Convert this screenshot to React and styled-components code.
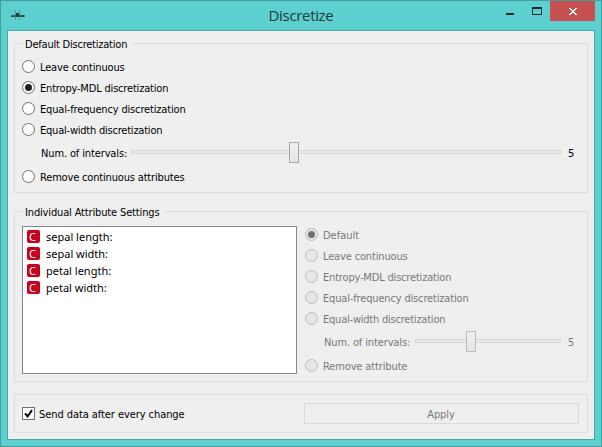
import React from 'react';
import styled, { createGlobalStyle } from 'styled-components';

const GlobalStyle = createGlobalStyle`
  * { box-sizing: border-box; }
  body { margin: 0; }
`;

const Window = styled.div`
  width: 602px;
  height: 447px;
  display: flex;
  flex-direction: column;
  padding: 0 6px 6px;
  background: #5ccfcf;
  border: 1px solid #479d9e;
  font: 11px/13px 'DejaVu Sans Condensed', 'DejaVu Sans', sans-serif;
  color: #000;
  white-space: nowrap;
`;

const TitleBar = styled.header`
  height: 29px;
  flex: none;
  display: grid;
  grid-template-columns: 150px 1fr 150px;
`;

const AppIcon = styled.svg`
  display: block;
  margin: 9px 0 0 3px;
`;

const WindowTitle = styled.h1`
  margin: 4px 0 0;
  font: 15px/20px 'Open Sans', sans-serif;
  letter-spacing: -0.33px;
  text-align: center;
  color: #25373a;
`;

const Controls = styled.div`
  display: flex;
  justify-content: flex-end;
  align-items: flex-start;
`;

const ControlButton = styled.button`
  width: ${p => p.$width}px;
  height: 20px;
  padding: 0;
  border: 0;
  background: ${p => (p.$close ? '#c75050' : 'transparent')};
  svg { display: block; }
`;

const Content = styled.main`
  flex: 1;
  display: flex;
  flex-direction: column;
  padding: 12px 6px 6px;
  background: #efefef;
  border: 1px solid #47a8a8;
`;

const Group = styled.section`
  height: ${p => p.$height}px;
  flex: none;
  margin-bottom: ${p => p.$gap || 0}px;
  padding: 0 9px 0 7px;
  border: 1px solid #dcdcdc;
`;

const GroupTitle = styled.h2`
  width: max-content;
  height: 13px;
  margin: -6px 0 0;
  padding: 0 5px 0 3px;
  background: #efefef;
  font: inherit;
  letter-spacing: ${p => p.$spacing}px;
`;

const Option = styled.label`
  height: 21px;
  display: flex;
  align-items: center;
  gap: 5px;
  color: ${p => (p.$disabled ? '#787878' : '#000')};
`;

const RadioCircle = styled.span`
  width: 13px;
  height: 13px;
  flex: none;
  display: grid;
  place-items: center;
  border-radius: 50%;
  border: 1px solid ${p => (p.$disabled ? '#bcbcbc' : '#707070')};
  background: ${p => (p.$disabled ? '#e6e6e6' : '#fff')};
  &::after {
    content: '';
    width: 7px;
    height: 7px;
    border-radius: 50%;
    background: ${p => (!p.$checked ? 'transparent' : p.$disabled ? '#707070' : '#212121')};
  }
`;

const Label = styled.span`
  padding-top: 2px;
  letter-spacing: ${p => p.$spacing || 0}px;
`;

const SliderRow = styled.div`
  height: 26px;
  display: flex;
  align-items: center;
  padding-left: 19px;
  color: ${p => (p.$disabled ? '#787878' : '#000')};
`;

const SliderLabel = styled.span`
  width: ${p => p.$width}px;
  letter-spacing: -0.13px;
`;

const Track = styled.div`
  position: relative;
  width: ${p => p.$width}px;
  height: 4px;
  margin: 0 7px 2px 0;
  background: #e7eaea;
  border: 1px solid #d6d6d6;
`;

const Thumb = styled.span`
  position: absolute;
  top: -9px;
  left: ${p => p.$offset}px;
  width: 10px;
  height: 21px;
  border: 1px solid ${p => (p.$disabled ? '#bbb' : '#a9a9a9')};
  background: linear-gradient(#f0f0f0, #e4e4e4);
`;

const DefaultOptions = styled.div`
  padding-top: 5px;
`;

const Columns = styled.div`
  display: flex;
  gap: 8px;
  padding-top: 7px;
`;

const AttributeList = styled.ul`
  width: 275px;
  height: 148px;
  margin: 0;
  padding: 1px 4px;
  list-style: none;
  background: #fff;
  border: 1px solid #828790;
`;

const Attribute = styled.li`
  height: 17px;
  display: flex;
  align-items: center;
  gap: 6px;
  font-family: 'Noto Sans', sans-serif;
`;

const TypeBadge = styled.span`
  width: 13px;
  height: 13px;
  padding-right: 2px;
  border-radius: 2px;
  background: #c8001e;
  color: #fff;
  font: 11px/13px 'Noto Sans', sans-serif;
  text-align: center;
`;

const AttributeOptions = styled.div`
  margin-top: -2px;
`;

const Footer = styled(Group)`
  display: flex;
  align-items: center;
  justify-content: space-between;
  padding-right: 8px;
`;

const CheckLabel = styled.label`
  display: flex;
  align-items: center;
  gap: 4px;
`;

const CheckBox = styled.span`
  width: 13px;
  height: 13px;
  border: 1px solid #707070;
  background: #fff;
  svg { display: block; }
`;

const ApplyButton = styled.button`
  width: 275px;
  height: 21px;
  padding: 2px 1px 0 0;
  border: 1px solid #d9d9d9;
  background: #efefef;
  color: #787878;
  font: inherit;
  letter-spacing: -0.1px;
`;

function Radio({ text, spacing, checked, disabled }) {
  return (
    <Option $disabled={disabled}>
      <RadioCircle $checked={checked} $disabled={disabled} />
      <Label $spacing={spacing}>{text}</Label>
    </Option>
  );
}

function Intervals({ width, offset, disabled }) {
  return (
    <SliderRow $disabled={disabled}>
      <SliderLabel $width={91}>Num. of intervals:</SliderLabel>
      <Track $width={width}>
        <Thumb $offset={offset} $disabled={disabled} />
      </Track>
      <span>5</span>
    </SliderRow>
  );
}

const attributes = ['sepal length:', 'sepal width:', 'petal length:', 'petal width:'];

export default function App() {
  return (
    <>
      <GlobalStyle />
      <Window>
        <TitleBar>
          <AppIcon width="16" height="12" viewBox="0 0 16 12" shapeRendering="crispEdges">
            <path d="M5 0h1v10H5zM9 0h1v10H9z" fill="#459c9c" />
            <path d="M1 5h14v2H1z" fill="#356a6a" />
            <path d="M1 6h3v1H1zM11 5h3v2h-3z" fill="#2c3e3e" />
            <path d="M6 3h3v4H6z" fill="#2e3a3a" />
          </AppIcon>
          <WindowTitle>Discretize</WindowTitle>
          <Controls>
            <ControlButton $width={26}>
              <svg width="26" height="20"><path d="M8 12h8v2H8z" fill="#25292b" /></svg>
            </ControlButton>
            <ControlButton $width={26}>
              <svg width="26" height="20"><path d="M8 6h10v8H8zM9 8v5h8V8z" fill="#25292b" fillRule="evenodd" /></svg>
            </ControlButton>
            <ControlButton $width={45} $close>
              <svg width="45" height="20" shapeRendering="crispEdges">
                <path d="M19 7h2v1h1v1h2V8h1V7h2v1h-1v1h-1v1h-1v1h1v1h1v1h1v1h-2v-1h-1v-1h-2v1h-1v1h-2v-1h1v-1h1v-1h1v-1h-1V9h-1V8h-1z" fill="#fff" />
              </svg>
            </ControlButton>
          </Controls>
        </TitleBar>
        <Content>
          <Group $height={150} $gap={18}>
            <GroupTitle $spacing={-0.22}>Default Discretization</GroupTitle>
            <DefaultOptions>
              <Radio text="Leave continuous" spacing={-0.15} />
              <Radio checked text="Entropy-MDL discretization" spacing={-0.18} />
              <Radio text="Equal-frequency discretization" spacing={-0.16} />
              <Radio text="Equal-width discretization" spacing={-0.22} />
              <Intervals width={429} offset={156} />
              <Radio text="Remove continuous attributes" spacing={-0.17} />
            </DefaultOptions>
          </Group>
          <Group $height={171} $gap={12}>
            <GroupTitle $spacing={-0.15}>Individual Attribute Settings</GroupTitle>
            <Columns>
              <AttributeList>
                {attributes.map(name => (
                  <Attribute key={name}>
                    <TypeBadge>C</TypeBadge>
                    <span>{name}</span>
                  </Attribute>
                ))}
              </AttributeList>
              <AttributeOptions>
                <Radio disabled checked text="Default" />
                <Radio disabled text="Leave continuous" spacing={-0.15} />
                <Radio disabled text="Entropy-MDL discretization" spacing={-0.18} />
                <Radio disabled text="Equal-frequency discretization" spacing={-0.16} />
                <Radio disabled text="Equal-width discretization" spacing={-0.22} />
                <Intervals disabled width={146} offset={50} />
                <Radio disabled text="Remove attribute" spacing={-0.13} />
              </AttributeOptions>
            </Columns>
          </Group>
          <Footer $height={39}>
            <CheckLabel>
              <CheckBox>
                <svg width="11" height="11"><path d="M2 5.3l2.6 3L9 2.2" fill="none" stroke="#000" strokeWidth="2" /></svg>
              </CheckBox>
              <Label $spacing={-0.07}>Send data after every change</Label>
            </CheckLabel>
            <ApplyButton>Apply</ApplyButton>
          </Footer>
        </Content>
      </Window>
    </>
  );
}
